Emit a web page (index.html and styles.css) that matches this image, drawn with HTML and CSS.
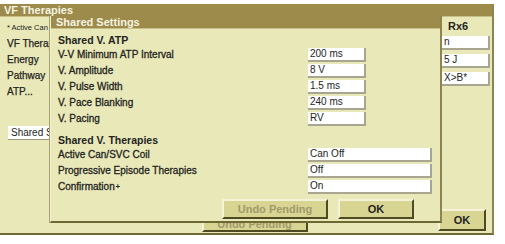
FILE: index.html
```html
<!DOCTYPE html>
<html lang="en">
<head>
    <meta charset="UTF-8">
    <title>VF Therapies - Shared Settings</title>
    <link rel="stylesheet" href="styles.css">
</head>
<body>

<div class="fenster">
    <div class="titel">VF Therapies</div>
    <div class="inhalt">
        <div class="links">
            <div class="hinweis">* Active Can</div>
            <div class="zeile kopf">VF Therap</div>
            <div class="zeile">Energy</div>
            <div class="zeile">Pathway</div>
            <div class="zeile">ATP...</div>
            <button class="klein-knopf">Shared S</button>
        </div>
        <div class="mitte">
            <button class="knopf grau hinten">Undo Pending</button>
        </div>
        <div class="rechts">
            <div class="rx">Rx6</div>
            <div class="feld schmal">n</div>
            <div class="feld schmal">5 J</div>
            <div class="feld schmal">X&gt;B*</div>
            <div class="platz"></div>
            <button class="knopf ok-aussen">OK</button>
        </div>
    </div>

    <!-- Dialog liegt über dem Fenster -->
    <div class="dialog">
        <div class="titel">Shared Settings</div>
        <div class="dialog-inhalt">
            <div class="abschnitt">Shared V. ATP</div>
            <div class="tabelle">
                <span>V-V Minimum ATP Interval</span><span class="feld">200 ms</span>
                <span>V. Amplitude</span><span class="feld">8 V</span>
                <span>V. Pulse Width</span><span class="feld">1.5 ms</span>
                <span>V. Pace Blanking</span><span class="feld">240 ms</span>
                <span>V. Pacing</span><span class="feld">RV</span>
            </div>
            <div class="abschnitt zwei">Shared V. Therapies</div>
            <div class="tabelle breit">
                <span>Active Can/SVC Coil</span><span class="feld">Can Off</span>
                <span>Progressive Episode Therapies</span><span class="feld">Off</span>
                <span>Confirmation<sup>+</sup></span><span class="feld">On</span>
            </div>
            <div class="knoepfe">
                <button class="knopf grau">Undo Pending</button>
                <button class="knopf ok">OK</button>
            </div>
        </div>
    </div>
</div>

</body>
</html>
```

FILE: styles.css
```css
body {
    margin: 0;
    background-color: #ffffff;
    font-family: "Liberation Sans", Arial, sans-serif;
    font-size: 10px;
    color: #24241e;
}

.fenster {
    position: relative;
    margin-top: 4px;
    width: 492px;
    height: 229px;
    background-color: #e8e8b8;
    border-right: 2px solid #8d8450;
    border-bottom: 2px solid #6e6835;
}

.titel {
    height: 12px;
    line-height: 12px;
    padding-left: 4px;
    background-color: #9c8b4a;
    color: #f6f3e2;
    font-weight: bold;
    font-size: 11px;
    border-bottom: 1px solid #c8c08a;
}

.inhalt {
    display: flex;
    height: 216px;
}

.links {
    width: 50px;
    display: flex;
    flex-direction: column;
    padding-left: 7px;
    white-space: nowrap;
}

.hinweis {
    font-size: 7.5px;
    margin-top: 6px;
    height: 12px;
}

.zeile {
    height: 16px;
    line-height: 16px;
    font-size: 10px;
    -webkit-text-stroke: 0.25px #24241e;
}

.kopf {
    margin-top: 1px;
}

.klein-knopf {
    margin-top: 26px;
    margin-left: 1px;
    width: 48px;
    height: 14px;
    padding: 0 0 0 3px;
    text-align: left;
    font-family: inherit;
    font-size: 10px;
    color: #24241e;
    background-color: #ffffff;
    border: none;
    border-bottom: 1px solid #9a9680;
    white-space: nowrap;
    overflow: hidden;
}

.mitte {
    flex: 1;
    display: flex;
    align-items: flex-end;
    justify-content: center;
    padding-bottom: 1px;
}

.rechts {
    width: 50px;
    display: flex;
    flex-direction: column;
}

.rx {
    font-weight: bold;
    font-size: 11px;
    height: 19px;
    line-height: 19px;
    padding-left: 6px;
}

.feld {
    display: block;
    height: 12px;
    line-height: 12px;
    padding-left: 2px;
    background-color: #ffffff;
    border-right: 2px solid #a8a590;
    border-bottom: 2px solid #a8a590;
    font-size: 10px;
    white-space: nowrap;
}

.schmal {
    margin-bottom: 4px;
    width: 44px;
}

.platz {
    flex: 1;
}

.knopf {
    font-family: inherit;
    font-weight: bold;
    font-size: 11px;
    background-color: #d8d492;
    color: #24241e;
    border: 2px solid;
    border-color: #f4f2d8 #4e4a22 #4e4a22 #f4f2d8;
    padding: 0;
}

.grau {
    color: #a09a6c;
    width: 106px;
    height: 20px;
}

.hinten {
    margin-left: 10px;
    height: 16px;
}

.ok {
    width: 76px;
    height: 20px;
}

.ok-aussen {
    width: 48px;
    height: 22px;
    margin-bottom: 2px;
    margin-left: -4px;
}

.dialog {
    position: absolute;
    left: 50px;
    top: 12px;
    width: 389px;
    height: 205px;
    background-color: #e8e8b8;
    border-left: 1px solid #f2f0d4;
    border-right: 2px solid #8d8450;
    border-bottom: 2px solid #6e6835;
    box-shadow: -1px 0 0 #a8a070;
}

.dialog .titel {
    height: 12px;
    padding-left: 5px;
}

.dialog-inhalt {
    padding: 3px 0 0 7px;
}

.abschnitt {
    font-weight: bold;
    font-size: 10.5px;
    height: 16px;
    line-height: 16px;
}

.zwei {
    margin-top: 4px;
}

.tabelle {
    display: grid;
    grid-template-columns: 250px 58px;
    grid-auto-rows: 16px;
    align-items: start;
    font-size: 10px;
}

.tabelle > span:nth-child(odd) {
    line-height: 14px;
    -webkit-text-stroke: 0.3px #24241e;
}

.breit {
    grid-template-columns: 250px 124px;
}

.tabelle sup {
    font-size: 7px;
    vertical-align: 1px;
    margin-left: 1px;
}

.knoepfe {
    display: flex;
    gap: 10px;
    margin-top: 3px;
    margin-left: 164px;
}
```
